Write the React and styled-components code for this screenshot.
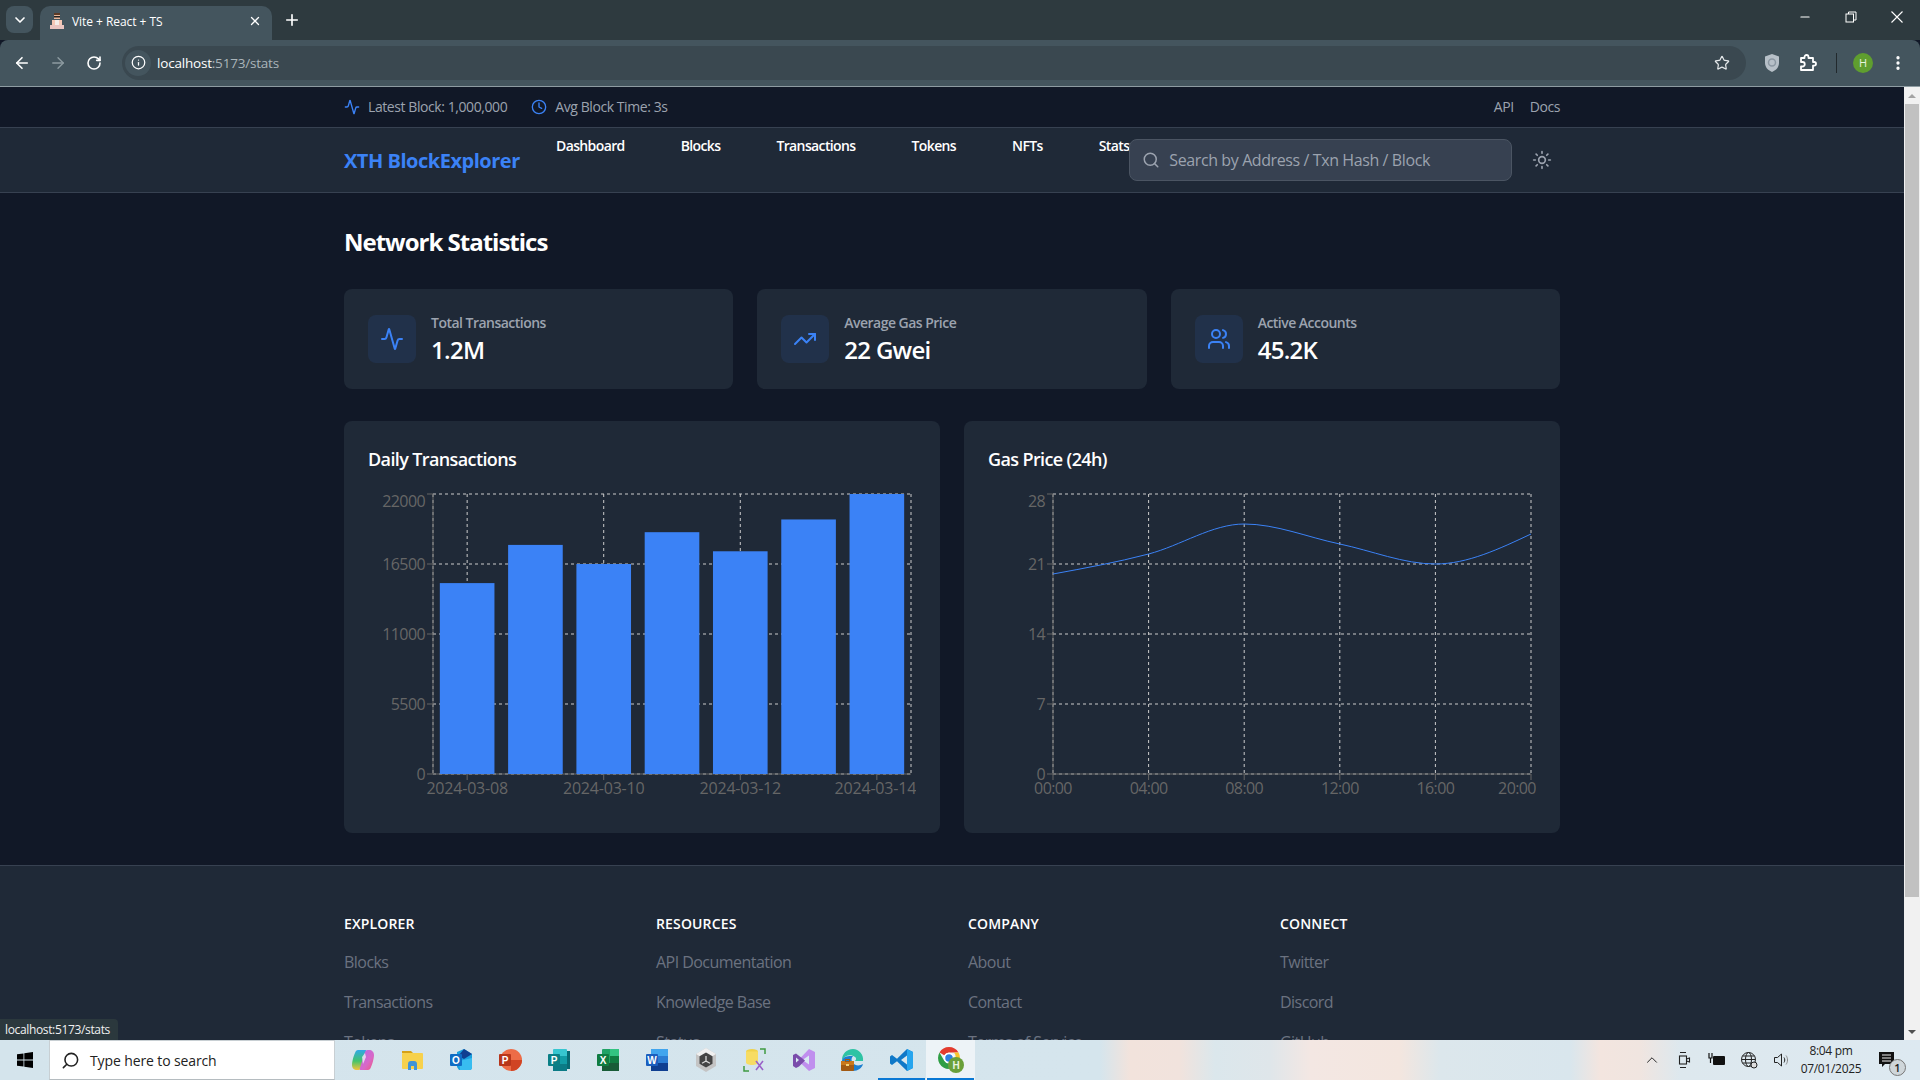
import React from "react";
import styled, { createGlobalStyle } from "styled-components";
import {
  Activity, Clock, TrendingUp, Users, Search, Sun, ArrowLeft, ArrowRight, RotateCw, Info, Star, X, Plus, Minus,
  ChevronDown, ChevronUp, EllipsisVertical,
} from "lucide-react";

const FONT = `"Open Sans", "Noto Sans", "Liberation Sans", sans-serif`;

const Global = createGlobalStyle`
  html, body { margin: 0; padding: 0; background: #111827; }
  body { font-family: ${FONT}; width: 1920px; height: 1080px; overflow: hidden; }
  * { box-sizing: border-box; }
`;

const Frame = styled.div`
  position: relative; width: 1920px; height: 1080px; display: flex; flex-direction: column; overflow: hidden;
`;

/* ---------- browser chrome ---------- */
const TabStrip = styled.div`
  height: 40px; background: #2e3a3f; display: flex; align-items: flex-start; padding: 6px 0 0 6px; flex: none;
`;
const TabMenu = styled.div`
  width: 27px; height: 27px; border-radius: 8px; background: #44555e; display: flex; align-items: center; justify-content: center; color: #fff;
`;
const Tab = styled.div`
  width: 232px; height: 34px; margin-left: 7px; background: #44555e; border-radius: 10px 10px 0 0; display: flex; align-items: center;
  padding: 0 10px 4px 9px; color: #fff; font-size: 12px; letter-spacing: -0.05px;
`;
const TabTitle = styled.span` margin-left: 7px; flex: 1; `;
const NewTab = styled.div` margin: 5px 0 0 11px; color: #fff; display: flex; `;
const WindowControls = styled.div`
  margin-left: auto; display: flex; color: #fff; height: 34px; align-items: center; margin-top: -6px; padding-top: 0;
`;
const WinBtn = styled.div` width: 46px; height: 40px; display: flex; align-items: center; justify-content: center; `;
const Toolbar = styled.div`
  height: 47px; background: #44555e; border-radius: 8px 8px 0 0; border-bottom: 1px solid #8e9ca2; display: flex; align-items: center; flex: none;
  padding: 0 0 1px 4px; color: #fff;
`;
const NavIcon = styled.div`
  width: 36px; flex: none; display: flex; justify-content: center; color: ${p => (p.$off ? "#8d9ba1" : "#fff")};
`;
const UrlBar = styled.div`
  margin-left: 10px; width: 1624px; height: 34px; border-radius: 17px; background: #3a4850; display: flex; align-items: center; padding-left: 3px; flex: none;
`;
const SiteInfo = styled.div`
  width: 26px; height: 26px; border-radius: 50%; background: #44555e; display: flex; align-items: center; justify-content: center;
`;
const Url = styled.span` margin-left: 6px; font-size: 13.5px; color: #fff; letter-spacing: -0.2px; flex: 1; `;
const UrlRest = styled.span` color: #aab5ba; `;
const UrlStar = styled.div` margin-right: 16px; display: flex; color: #e4e8ea; `;
const ToolIcons = styled.div` margin-left: 8px; flex: 1; min-width: 0; display: flex; align-items: center; `;
const ToolSlot = styled.div` width: ${p => p.$w}px; flex: none; display: flex; justify-content: center; align-items: center; `;
const ToolDivider = styled.div` width: 1px; height: 20px; flex: none; background: #22292d; margin: 0 16px 0 10px; `;
const Avatar = styled.div`
  width: 20px; height: 20px; border-radius: 50%; background: #5f9e2f; color: #e8f2dd; font-size: 11px; display: flex; align-items: center; justify-content: center;
`;

/* ---------- page viewport ---------- */
const Viewport = styled.div` flex: 1; min-height: 0; display: flex; overflow: hidden; `;
const Page = styled.div` width: 1904px; height: 953px; overflow: hidden; background: #111827; flex: none; `;
const Scrollbar = styled.div`
  width: 16px; background: #f1f1f1; display: flex; flex-direction: column; align-items: center; position: relative;
`;
const ScrollArrow = styled.div`
  height: 17px; width: 100%; display: flex; align-items: center; justify-content: center; flex: none;
  &::after {
    content: ""; width: 0; height: 0; border-left: 4px solid transparent; border-right: 4px solid transparent;
    ${p => (p.$down ? "border-top: 4px solid #505050;" : "border-bottom: 4px solid #a3a3a3;")}
  }
`;
const ScrollThumb = styled.div` width: 14px; height: 793px; background: #c1c1c1; flex: none; `;
const ScrollFill = styled.div` flex: 1; `;

const TopBar = styled.div` height: 41px; background: #111827; border-bottom: 1px solid #374151; `;
const Container = styled.div` width: 1216px; margin: 0 auto; `;
const TopInner = styled(Container)`
  height: 40px; padding-bottom: 2px; display: flex; align-items: center; justify-content: space-between; font-size: 14px; color: #9ca3af; letter-spacing: -0.42px;
`;
const TopGroup = styled.div` display: flex; align-items: center; gap: ${p => p.$gap}px; `;
const Stat = styled.div` display: flex; align-items: center; gap: 8px; svg { color: #3b82f6; margin-top: 2px; } `;
const Header = styled.div` height: 65px; background: #1f2937; border-bottom: 1px solid #374151; `;
const HeaderInner = styled(Container)` height: 64px; display: flex; align-items: center; `;
const Logo = styled.div` font-size: 20px; font-weight: 700; color: #3b82f6; letter-spacing: -0.48px; width: 212px; flex: none; `;
const NavLinks = styled.nav` display: flex; gap: 56px; align-self: flex-start; margin-top: 8px; `;
const NavLink = styled.a`
  font-size: 14px; line-height: 20px; font-weight: 600; color: #fff; letter-spacing: -0.62px;
`;
const SearchBox = styled.div`
  margin-left: auto; width: 383px; height: 42px; border: 1px solid #4b5563; border-radius: 8px; background: #374151; display: flex; align-items: center;
  padding-left: 12px; gap: 9px; color: #9ca3af; font-size: 16px; letter-spacing: -0.4px; flex: none;
`;
const ThemeBtn = styled.div` margin: 0 9px 0 12px; padding: 8px 9px 8px 8px; display: flex; color: #9ca3af; `;

const Main = styled(Container)` padding-top: 33px; padding-bottom: 32px; `;
const Title = styled.h1`
  margin: 0 0 31px; font-size: 24px; line-height: 32px; font-weight: 700; color: #fff; letter-spacing: -1px;
`;
const CardRow = styled.div` display: grid; grid-template-columns: repeat(3, 1fr); gap: 24px; margin-bottom: 32px; `;
const Card = styled.div` background: #1f2937; border-radius: 8px; padding: 24px; display: flex; align-items: center; height: 100px; `;
const IconBox = styled.div`
  width: 48px; height: 48px; border-radius: 8px; background: rgba(59, 130, 246, 0.1); color: #3b82f6; display: flex; align-items: center; justify-content: center; margin-right: 15px; flex: none;
`;
const CardText = styled.div` display: flex; flex-direction: column; margin-top: 1px; `;
const CardLabel = styled.div` font-size: 14px; line-height: 20px; font-weight: 600; color: #9ca3af; letter-spacing: -0.52px; `;
const CardValue = styled.div` margin-top: 1px; font-size: 24px; line-height: 32px; font-weight: 600; color: #fff; letter-spacing: -0.7px; `;
const ChartRow = styled.div` display: grid; grid-template-columns: 1fr 1fr; gap: 24px; `;
const ChartCard = styled.div` background: #1f2937; border-radius: 8px; padding: 24px; `;
const ChartTitle = styled.h2`
  margin: 0 0 16px; font-size: 18px; line-height: 28px; font-weight: 600; color: #fff; letter-spacing: -0.62px;
`;
const ChartSvg = styled.svg`
  display: block;
  text { font-family: ${FONT}; font-size: 16px; fill: #666; letter-spacing: -0.6px; }
`;
const XTick = styled.text`
  && { letter-spacing: ${p => (p.$date ? "-0.2px" : "-0.6px")}; }
`;

const Footer = styled.footer` background: #1f2937; border-top: 1px solid #374151; padding-top: 48px; height: 200px; `;
const FootGrid = styled(Container)` display: grid; grid-template-columns: repeat(4, 1fr); gap: 32px; `;
const FootHead = styled.h3`
  margin: 0 0 16px; font-size: 14px; line-height: 20px; font-weight: 600; color: #fff; text-transform: uppercase; letter-spacing: 0.15px;
`;
const FootList = styled.ul` list-style: none; margin: 0; padding: 0; display: flex; flex-direction: column; gap: 16px; `;
const FootLink = styled.li` font-size: 16px; line-height: 24px; color: #6b7280; letter-spacing: -0.54px; `;

const StatusTip = styled.div`
  position: absolute; left: 0; bottom: 40px; height: 21px; width: 118px; background: #2b383d; border-radius: 0 4px 0 0; color: #f0f0f0; font-size: 12px;
  display: flex; align-items: center; padding-left: 5px; letter-spacing: -0.35px;
`;

/* ---------- taskbar ---------- */
const Taskbar = styled.div`
  height: 40px; flex: none; display: flex; align-items: stretch; position: relative;
  background: linear-gradient(90deg, #d4e4ec 0, #d5e5ed 1100px, #f2e3dc 1130px, #f1e3dd 1180px, #dbe7ec 1215px, #dfe6ea 1270px, #f3e7e3 1310px, #f3e6df 1400px, #dce7ec 1440px, #d9e6ed 1570px, #f3e5df 1600px, #f0e5e0 1640px, #dde8ee 1680px, #dde9f1 1920px);
`;
const StartBtn = styled.div` width: 49px; display: flex; align-items: center; justify-content: center; color: #000; flex: none; `;
const TaskSearch = styled.div`
  width: 286px; background: #fff; border: 1px solid #c8cfd3; border-bottom-color: #b5bcc0; display: flex; align-items: center; padding-left: 11px; gap: 10px; font-size: 14px; color: #222; letter-spacing: -0.12px; flex: none;
`;
const TaskApps = styled.div` display: flex; margin-left: 3px; `;
const TaskApp = styled.div`
  width: 49px; display: flex; align-items: center; justify-content: center; position: relative;
  background: ${p => (p.$current ? "#edf3f7" : "transparent")};
  &::after {
    content: ""; display: ${p => (p.$running ? "block" : "none")}; position: absolute; left: 1px; right: 1px; bottom: 0; height: 2px; background: #0a78d4;
  }
`;
const Tray = styled.div` margin-left: auto; display: flex; align-items: center; color: #222; padding-right: 14px; `;
const TrayIcon = styled.div` width: 32.5px; display: flex; justify-content: center; `;
const TrayClock = styled.div`
  width: 72px; text-align: center; font-size: 12px; line-height: 18px; color: #222; letter-spacing: -0.3px; margin-left: -3px;
`;
const NotifyWrap = styled.div` width: 38px; margin-left: 1px; display: flex; justify-content: center; position: relative; `;
const NotifyBadge = styled.div`
  position: absolute; left: 21px; top: 8px; width: 17px; height: 17px; border-radius: 50%; background: #cfd6da; border: 1px solid #777; font-size: 11px; font-weight: 600; color: #222;
  display: flex; align-items: center; justify-content: center;
`;

/* ---------- icons ---------- */
const LetterIcon = ({ letter, x = 1, bg, children }) => (
  <svg width="24" height="24" viewBox="0 0 24 24">
    {children}
    <rect x={x} y="6" width="12" height="12" rx="1" fill={bg} />
    <text x={x + 6} y="15.6" textAnchor="middle" fontFamily="Liberation Sans, sans-serif" fontSize="10" fontWeight="700" fill="#fff">{letter}</text>
  </svg>
);
const Copilot = () => (
  <svg width="24" height="24" viewBox="0 0 24 24">
    <defs>
      <linearGradient id="cpA" x1="0" y1="0" x2="0" y2="1"><stop offset="0" stopColor="#2fa8e8" /><stop offset=".55" stopColor="#43c46b" /><stop offset="1" stopColor="#f5c33b" /></linearGradient>
      <linearGradient id="cpB" x1="0" y1="0" x2="1" y2="1"><stop offset="0" stopColor="#b36ae8" /><stop offset=".6" stopColor="#d868c8" /><stop offset="1" stopColor="#f0567a" /></linearGradient>
    </defs>
    <path d="M7 2h7c1 0 1.6.6 1.2 1.6L10 20c-.4 1.2-1.3 2-2.5 2H6c-3 0-5-2-5-5 0-3 1.5-9 3-12 .6-1.8 1.6-3 3-3z" fill="url(#cpA)" />
    <path d="M17 22h-7c-1 0-1.6-.6-1.2-1.6L14 4c.4-1.2 1.3-2 2.5-2H18c3 0 5 2 5 5 0 3-1.5 9-3 12-.6 1.8-1.6 3-3 3z" fill="url(#cpB)" />
    <path d="M11 9l3-4 1 4-3 7z" fill="#f2f5f8" opacity=".75" />
  </svg>
);
const Folder = () => (
  <svg width="24" height="24" viewBox="0 0 24 24">
    <path d="M2 3h9l2 2h-11z" fill="#d6a118" />
    <rect x="2" y="5" width="21" height="16" rx="1" fill="#f7d14c" />
    <path d="M8 22v-6a3 3 0 0 1 3-3h3a3 3 0 0 1 3 3v6h-3v-4h-3v4z" fill="#3f93d8" />
  </svg>
);
const Outlook = () => (
  <LetterIcon letter="O" bg="#0f6cc4">
    <path d="M8 4l7-3 8 5v13c0 2-1 3-2 3H10L8 19z" fill="#1aa0de" />
    <path d="M15 1l8 5-8 5-6-3z" fill="#103f91" />
    <path d="M10 13l13-3v9c0 2-1 3-2 3H11z" fill="#38bdf0" />
  </LetterIcon>
);
const Powerpoint = () => (
  <LetterIcon letter="P" bg="#b7361b">
    <circle cx="13" cy="12" r="11" fill="#ed6c47" />
    <path d="M13 12h11a11 11 0 0 1-11 11z" fill="#d04423" />
  </LetterIcon>
);
const Publisher = () => (
  <LetterIcon letter="P" bg="#0a7f86">
    <rect x="6" y="1" width="14" height="22" rx="1" fill="#37c6d0" />
    <rect x="6" y="8" width="14" height="8" fill="#129ca6" />
    <rect x="6" y="16" width="14" height="7" fill="#0b7b86" />
    <rect x="20" y="3" width="3" height="18" fill="#086a74" />
  </LetterIcon>
);
const Excel = () => (
  <LetterIcon letter="X" bg="#107c41">
    <rect x="6" y="1" width="17" height="22" rx="1" fill="#21a366" />
    <rect x="14" y="1" width="9" height="7" fill="#33c481" />
    <rect x="6" y="15" width="17" height="8" fill="#185c37" />
    <rect x="14" y="8" width="9" height="7" fill="#107c41" />
  </LetterIcon>
);
const Word = () => (
  <LetterIcon letter="W" bg="#1b5ebe">
    <rect x="6" y="1" width="17" height="22" rx="1" fill="#2b7cd3" />
    <rect x="6" y="1" width="17" height="7" fill="#41a5ee" />
    <rect x="6" y="15" width="17" height="8" fill="#103f91" />
  </LetterIcon>
);
const Unity = () => (
  <svg width="24" height="24" viewBox="0 0 24 24">
    <path d="M12 0l10 6v12l-10 6-10-6V6z" fill="#c4c4c4" />
    <path d="M12 0l10 6-10 6L2 6z" fill="#f0f0f0" />
    <path d="M12 4.500l6.500 3.800v7.400L12 19.500l-6.500-3.800V8.300z" fill="#444" />
    <path d="M12 8v5l4 2.300M12 13l-4 2.300" stroke="#d8d8d8" strokeWidth="1.300" fill="none" />
  </svg>
);
const SqlTool = () => (
  <svg width="24" height="24" viewBox="0 0 24 24">
    <ellipse cx="9" cy="3.500" rx="6" ry="2.500" fill="#f0d24a" />
    <path d="M3 3.500v11c0 1.400 2.700 2.500 6 2.500s6-1.100 6-2.500v-11z" fill="#f7dc63" />
    <path d="M17 1h5v5M1 18v5h5" stroke="#3f9a42" strokeWidth="1.500" fill="none" />
    <path d="M13 13l7 9M20 13l-7 9" stroke="#9a62c8" strokeWidth="1.600" />
  </svg>
);
const VisualStudio = () => (
  <svg width="24" height="24" viewBox="0 0 24 24">
    <path d="M17 1l6 3v16l-6 3-11-10.500z" fill="#c08fee" />
    <path d="M17 7.500v9L10.500 12z" fill="#d8eaf2" />
    <path d="M1 7l3-1.500 9 7-6 6-3 1.500-3-2V7z" fill="#7a4cab" />
    <path d="M4 9.500v5L7 12z" fill="#d8eaf2" />
  </svg>
);
const Edge = () => (
  <svg width="24" height="24" viewBox="0 0 24 24">
    <path d="M12 1C5.500 1 1 6 1 12c3-5 9-6 13-3 2 1.500 1 4-1 4h9c1-6-4-12-10-12z" fill="#2fc3a4" />
    <path d="M1 12c0 6 5 11 11 11 5 0 9-3 10-7-3 2-8 2-10-1-2-2-2-5 0-7-5 0-9 0-11 4z" fill="#1c7fd0" />
    <rect x="0" y="13" width="13" height="10" rx="1" fill="#a25a13" />
    <rect x="0" y="13" width="13" height="4" fill="#c9781b" />
    <rect x="4.500" y="11.500" width="4" height="2" fill="none" stroke="#a25a13" />
    <rect x="5" y="16" width="3" height="2" fill="#f3d27a" />
  </svg>
);
const VSCode = () => (
  <svg width="24" height="24" viewBox="0 0 24 24">
    <path d="M17 1l6 3v16l-6 3-10-9.800L2 17l-2-1.500V8.500L2 7l5 3.800z" fill="#0f78c8" />
    <path d="M17 1l6 3v16l-6 3z" fill="#27a5ee" />
    <path d="M17 7.500L11 12l6 4.500z" fill="#d8e7ee" />
  </svg>
);
const Chrome = () => (
  <svg width="28" height="28" viewBox="0 0 28 28">
    <path d="M12 1a11 11 0 0 1 9.500 5.500H12a5.500 5.500 0 0 0-4.800 2.800L2.500 6.500A11 11 0 0 1 12 1z" fill="#e33b2e" />
    <path d="M21.500 6.500A11 11 0 0 1 12 23l4.800-8.300a5.500 5.500 0 0 0 0-8.200z" fill="#f7c52c" />
    <path d="M2.500 6.500l4.700 8.200A5.500 5.500 0 0 0 12 17.500l-.1 5.500A11 11 0 0 1 2.500 6.500z" fill="#2f9e45" />
    <circle cx="12" cy="12" r="4.500" fill="#2f7fe0" stroke="#fff" strokeWidth="1.500" />
    <circle cx="19" cy="19" r="8" fill="#6aa03a" />
    <text x="19" y="22.500" textAnchor="middle" fontFamily="Liberation Sans, sans-serif" fontSize="10" fontWeight="700" fill="#e9f3df">H</text>
  </svg>
);
const WinLogo = () => (
  <svg width="16" height="16" viewBox="0 0 16 16" fill="#000">
    <path d="M0 2.300l6.500-.9v6.200H0zM7.300 1.300L16 0v7.600H7.300zM0 8.400h6.500v6.200L0 13.700zM7.300 8.400H16V16l-8.700-1.300z" />
  </svg>
);
const Favicon = () => (
  <svg width="16" height="18" viewBox="0 0 16 18">
    <rect x="5" y="1" width="6" height="2" fill="#5b3a26" />
    <rect x="5" y="3" width="6" height="4" fill="#e9b79a" />
    <rect x="5" y="4" width="6" height="1.500" fill="#222" />
    <rect x="3" y="8" width="10" height="5" fill="#f4c6b4" />
    <rect x="6" y="8" width="4" height="5" fill="#f4ece8" />
    <rect x="1" y="13" width="14" height="4" fill="#e9c4c0" />
  </svg>
);
const Shield = () => (
  <svg width="16" height="20" viewBox="0 0 16 20">
    <path d="M8 1l7 2.500V10c0 4.500-3.500 7.500-7 9-3.500-1.500-7-4.500-7-9V3.500z" fill="#b7c0c8" />
    <circle cx="8" cy="9.500" r="3.500" fill="none" stroke="#8b97a2" strokeWidth="1.500" />
  </svg>
);
const Extension = () => (
  <svg width="18" height="18" viewBox="0 0 18 18" fill="none" stroke="#fff" strokeWidth="1.800" strokeLinejoin="round">
    <path d="M2 4h3.500V3a2 2 0 0 1 4 0v1H14v4h1.200a1.800 1.800 0 0 1 0 3.600H14V16H2v-3.500h1.500a2 2 0 0 0 0-4.500H2z" />
  </svg>
);
const Restore = () => (
  <svg width="12" height="12" viewBox="0 0 12 12" fill="none" stroke="#fff" strokeWidth="1">
    <rect x="1" y="3" width="7.500" height="8" />
    <path d="M3.500 3V1H11v8H8.500" />
  </svg>
);
const CloseIcon = () => (
  <svg width="14" height="14" viewBox="0 0 14 14" stroke="#fff" strokeWidth="1.100"><path d="M1.500 1.500l11 11M12.500 1.500l-11 11" /></svg>
);
const TrayCam = () => (
  <svg width="16" height="20" viewBox="0 0 16 20" fill="none" stroke="#222" strokeWidth="1.100">
    <rect x="3.500" y="6" width="7" height="8" /><path d="M10.500 9l3-1v4l-3-1M4 2.500h6M4 17.500h6" />
  </svg>
);
const TrayPlug = () => (
  <svg width="18" height="16" viewBox="0 0 18 16"><rect x="5" y="4" width="12" height="9" rx="1" fill="#111" /><path d="M1 1v5h3V1M2.500 6v5" stroke="#111" strokeWidth="1.200" fill="none" /></svg>
);
const TrayGlobe = () => (
  <svg width="18" height="18" viewBox="0 0 18 18" fill="none" stroke="#222" strokeWidth="1">
    <circle cx="8.500" cy="8.500" r="7" /><ellipse cx="8.500" cy="8.500" rx="3" ry="7" /><path d="M1.500 8.500h14M2.500 5h12M2.500 12h12" />
    <circle cx="14" cy="14" r="3" fill="#ddd" />
  </svg>
);
const TraySpeaker = () => (
  <svg width="18" height="18" viewBox="0 0 18 18" fill="none" stroke="#222" strokeWidth="1">
    <path d="M1.500 6.500h3l4-3.500v12l-4-3.500h-3z" /><path d="M11 6.500c1 1.500 1 3.500 0 5" /><path d="M13 4.500c2 2.500 2 6.500 0 9" stroke="#888" />
  </svg>
);
const NotifyIcon = () => (
  <svg width="16" height="18" viewBox="0 0 16 18"><path d="M0 1h15v12H6l-3 3v-3H0z" fill="#111" /><path d="M3 4h9M3 7h9M3 10h9" stroke="#eee" strokeWidth="1" /></svg>
);

/* ---------- charts ---------- */
const CW = 548, CH = 320, L = 65, R = 543, T = 5, B = 285;
const PW = R - L, PH = B - T;

const slopeInner = (h0, h1, s0, s1) => {
  const p = (s0 * h1 + s1 * h0) / (h0 + h1);
  return (Math.sign(s0) + Math.sign(s1)) * Math.min(Math.abs(s0), Math.abs(s1), 0.5 * Math.abs(p)) || 0;
};
const monotonePath = pts => {
  const n = pts.length;
  const s = [];
  for (let i = 0; i < n - 1; i++) s.push((pts[i + 1][1] - pts[i][1]) / (pts[i + 1][0] - pts[i][0]));
  const t = new Array(n);
  for (let i = 1; i < n - 1; i++) t[i] = slopeInner(pts[i][0] - pts[i - 1][0], pts[i + 1][0] - pts[i][0], s[i - 1], s[i]);
  t[0] = (3 * s[0] - t[1]) / 2;
  t[n - 1] = (3 * s[n - 2] - t[n - 2]) / 2;
  let d = `M${pts[0][0]},${pts[0][1]}`;
  for (let i = 0; i < n - 1; i++) {
    const h = (pts[i + 1][0] - pts[i][0]) / 3;
    d += `C${pts[i][0] + h},${pts[i][1] + h * t[i]},${pts[i + 1][0] - h},${pts[i + 1][1] - h * t[i + 1]},${pts[i + 1][0]},${pts[i + 1][1]}`;
  }
  return d;
};

const GRID = "#ccc", AXIS = "#666";

const Frame2 = ({ yTicks, yMax, xLines, xLabels, date }) => {
  const yOf = v => B - (v / yMax) * PH;
  return (
    <>
      <g stroke={GRID} strokeDasharray="3 3" fill="none">
        {yTicks.map(v => <line key={v} x1={L} x2={R} y1={yOf(v)} y2={yOf(v)} />)}
        {[L, ...xLines, R].map(x => <line key={x} x1={x} x2={x} y1={T} y2={B} />)}
      </g>
      <line x1={L} x2={R} y1={B} y2={B} stroke={AXIS} />
      <line x1={L} x2={L} y1={T} y2={B} stroke={AXIS} />
      {yTicks.map(v => (
        <g key={v}>
          <line x1={L - 6} x2={L} y1={yOf(v)} y2={yOf(v)} stroke={AXIS} />
          <text x={L - 8} y={v === yMax ? yOf(v) + 13 : yOf(v) + 5.5} textAnchor="end">{v}</text>
        </g>
      ))}
      {xLabels.map(l => (
        <g key={l.text}>
          <line x1={l.x} x2={l.x} y1={B} y2={B + 6} stroke={AXIS} />
          <XTick $date={date} x={l.labelX ?? l.x} y={B + 19.5} textAnchor="middle">{l.text}</XTick>
        </g>
      ))}
    </>
  );
};

const BAR_VALUES = [15000, 18000, 16500, 19000, 17500, 20000, 22000];
const BarChart = () => {
  const band = PW / 7;
  const c = i => L + band * (i + 0.5);
  const labels = [0, 2, 4, 6].map(i => ({ x: c(i), text: `2024-03-${String(8 + i).padStart(2, "0")}`, labelX: i === 6 ? c(i) - 1.5 : c(i) }));
  return (
    <ChartSvg width={CW} height={CH} viewBox={`0 0 ${CW} ${CH}`}>
      <Frame2 date yTicks={[0, 5500, 11000, 16500, 22000]} yMax={22000} xLines={labels.map(l => l.x)} xLabels={labels} />
      {BAR_VALUES.map((v, i) => {
        const h = (v / 22000) * PH;
        return <rect key={i} x={L + band * i + band * 0.1} y={B - h} width={band * 0.8} height={h} fill="#3b82f6" />;
      })}
    </ChartSvg>
  );
};

const GAS = [20, 22, 25, 23, 21, 24];
const LineChart = () => {
  const step = PW / 5;
  const pts = GAS.map((v, i) => [L + step * i, B - (v / 28) * PH]);
  const labels = ["00:00", "04:00", "08:00", "12:00", "16:00", "20:00"].map((text, i) => ({
    x: L + step * i, text, labelX: i === 5 ? L + step * i - 14 : L + step * i,
  }));
  return (
    <ChartSvg width={CW} height={CH} viewBox={`0 0 ${CW} ${CH}`}>
      <Frame2 yTicks={[0, 7, 14, 21, 28]} yMax={28} xLines={labels.slice(1, 5).map(l => l.x)} xLabels={labels} />
      <path d={monotonePath(pts)} fill="none" stroke="#3b82f6" strokeWidth="1" />
    </ChartSvg>
  );
};

const NAV = ["Dashboard", "Blocks", "Transactions", "Tokens", "NFTs", "Stats"];
const STATS = [
  { label: "Total Transactions", value: "1.2M", Icon: Activity },
  { label: "Average Gas Price", value: "22 Gwei", Icon: TrendingUp },
  { label: "Active Accounts", value: "45.2K", Icon: Users },
];
const FOOT = [
  { head: "Explorer", links: ["Blocks", "Transactions", "Tokens"] },
  { head: "Resources", links: ["API Documentation", "Knowledge Base", "Status"] },
  { head: "Company", links: ["About", "Contact", "Terms of Service"] },
  { head: "Connect", links: ["Twitter", "Discord", "GitHub"] },
];
const APPS = [
  { C: Copilot }, { C: Folder }, { C: Outlook }, { C: Powerpoint }, { C: Publisher }, { C: Excel }, { C: Word },
  { C: Unity }, { C: SqlTool }, { C: VisualStudio }, { C: Edge }, { C: VSCode, running: true }, { C: Chrome, running: true, current: true },
];

export default function App() {
  return (
    <Frame>
      <Global />
      <TabStrip>
        <TabMenu><ChevronDown size={16} strokeWidth={2.5} /></TabMenu>
        <Tab>
          <Favicon />
          <TabTitle>Vite + React + TS</TabTitle>
          <X size={14} strokeWidth={2.2} />
        </Tab>
        <NewTab><Plus size={18} strokeWidth={2.2} /></NewTab>
        <WindowControls>
          <WinBtn><Minus size={14} strokeWidth={2} /></WinBtn>
          <WinBtn><Restore /></WinBtn>
          <WinBtn><CloseIcon /></WinBtn>
        </WindowControls>
      </TabStrip>
      <Toolbar>
        <NavIcon><ArrowLeft size={18} strokeWidth={2.2} /></NavIcon>
        <NavIcon $off><ArrowRight size={18} strokeWidth={1.8} /></NavIcon>
        <NavIcon><RotateCw size={16} strokeWidth={2.4} /></NavIcon>
        <UrlBar>
          <SiteInfo><Info size={15} strokeWidth={2} /></SiteInfo>
          <Url>localhost<UrlRest>:5173/stats</UrlRest></Url>
          <UrlStar><Star size={16} strokeWidth={1.8} /></UrlStar>
        </UrlBar>
        <ToolIcons>
          <ToolSlot $w={36}><Shield /></ToolSlot>
          <ToolSlot $w={36}><Extension /></ToolSlot>
          <ToolDivider />
          <ToolSlot $w={20}><Avatar>H</Avatar></ToolSlot>
          <ToolSlot $w={50}><EllipsisVertical size={18} strokeWidth={2.4} /></ToolSlot>
        </ToolIcons>
      </Toolbar>
      <Viewport>
        <Page>
          <TopBar>
            <TopInner>
              <TopGroup $gap={24}>
                <Stat><Activity size={16} />Latest Block: 1,000,000</Stat>
                <Stat><Clock size={16} />Avg Block Time: 3s</Stat>
              </TopGroup>
              <TopGroup $gap={16}><a>API</a><a>Docs</a></TopGroup>
            </TopInner>
          </TopBar>
          <Header>
            <HeaderInner>
              <Logo>XTH BlockExplorer</Logo>
              <NavLinks>{NAV.map(n => <NavLink key={n}>{n}</NavLink>)}</NavLinks>
              <SearchBox><Search size={18} />Search by Address / Txn Hash / Block</SearchBox>
              <ThemeBtn><Sun size={20} /></ThemeBtn>
            </HeaderInner>
          </Header>
          <Main>
            <Title>Network Statistics</Title>
            <CardRow>
              {STATS.map(({ label, value, Icon }) => (
                <Card key={label}>
                  <IconBox><Icon size={24} /></IconBox>
                  <CardText>
                    <CardLabel>{label}</CardLabel>
                    <CardValue>{value}</CardValue>
                  </CardText>
                </Card>
              ))}
            </CardRow>
            <ChartRow>
              <ChartCard><ChartTitle>Daily Transactions</ChartTitle><BarChart /></ChartCard>
              <ChartCard><ChartTitle>Gas Price (24h)</ChartTitle><LineChart /></ChartCard>
            </ChartRow>
          </Main>
          <Footer>
            <FootGrid>
              {FOOT.map(col => (
                <div key={col.head}>
                  <FootHead>{col.head}</FootHead>
                  <FootList>{col.links.map(l => <FootLink key={l}>{l}</FootLink>)}</FootList>
                </div>
              ))}
            </FootGrid>
          </Footer>
        </Page>
        <Scrollbar>
          <ScrollArrow />
          <ScrollThumb />
          <ScrollFill />
          <ScrollArrow $down />
        </Scrollbar>
      </Viewport>
      <StatusTip>localhost:5173/stats</StatusTip>
      <Taskbar>
        <StartBtn><WinLogo /></StartBtn>
        <TaskSearch><Search size={19} style={{ transform: "scaleX(-1)" }} />Type here to search</TaskSearch>
        <TaskApps>
          {APPS.map(({ C, running, current }, i) => (
            <TaskApp key={i} $running={running} $current={current}><C /></TaskApp>
          ))}
        </TaskApps>
        <Tray>
          <TrayIcon><ChevronUp size={18} strokeWidth={1.3} /></TrayIcon>
          <TrayIcon><TrayCam /></TrayIcon>
          <TrayIcon><TrayPlug /></TrayIcon>
          <TrayIcon><TrayGlobe /></TrayIcon>
          <TrayIcon><TraySpeaker /></TrayIcon>
          <TrayClock>8:04 pm<br />07/01/2025</TrayClock>
          <NotifyWrap><NotifyIcon /><NotifyBadge>1</NotifyBadge></NotifyWrap>
        </Tray>
      </Taskbar>
    </Frame>
  );
}
